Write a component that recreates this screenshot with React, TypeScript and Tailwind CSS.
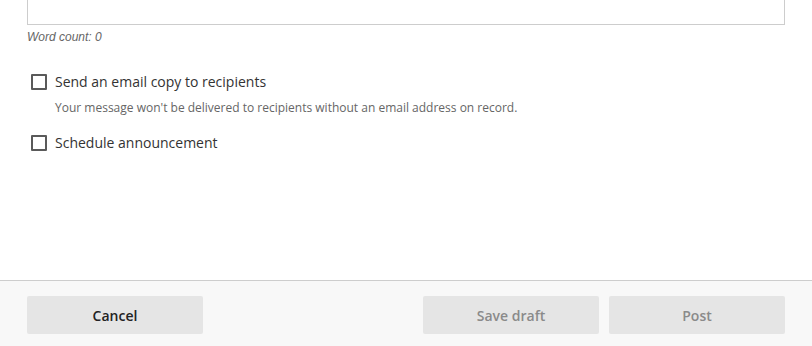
export default function App() {
  return (
    <div
      className="flex h-[346px] w-[812px] flex-col bg-white text-[#333]"
      style={{ fontFamily: '"Open Sans", sans-serif' }}
    >
      <div className="flex-1 px-[27px]">
        <div className="h-[25px] border border-t-0 border-[#cdcdcd] bg-white" />
        <p
          className="mt-[5px] text-[12px] italic leading-[14px] text-[#666]"
          style={{ fontFamily: '"Liberation Sans", Arial, sans-serif' }}
        >
          Word count: 0
        </p>

        <div className="mt-[28px] flex flex-col">
          <label className="flex items-center gap-[8px] pl-[4px]">
            <span className="h-[16px] w-[16px] rounded-[1px] border-2 border-[#5a5a5a]" />
            <span className="text-[14px] leading-[20px] text-[#333]">Send an email copy to recipients</span>
          </label>
          <p className="mt-[8px] pl-[28px] text-[12px] leading-[16px] text-[#666]">
            Your message won't be delivered to recipients without an email address on record.
          </p>
          <label className="mt-[17px] flex items-center gap-[8px] pl-[4px]">
            <span className="h-[16px] w-[16px] rounded-[1px] border-2 border-[#5a5a5a]" />
            <span className="text-[14px] leading-[20px] text-[#333]">Schedule announcement</span>
          </label>
        </div>
      </div>

      <div className="flex h-[66px] items-start justify-between border-t border-[#cdcdcd] bg-[#f8f8f8] px-[27px] pt-[15px]">
        <button className="h-[38px] w-[176px] rounded-[2px] bg-[#e5e5e5] text-[14px] font-semibold text-[#222]">
          Cancel
        </button>
        <div className="flex gap-[10px]">
          <button className="h-[38px] w-[176px] rounded-[2px] bg-[#e5e5e5] text-[14px] font-semibold text-[#8a8a8a]">
            Save draft
          </button>
          <button className="h-[38px] w-[176px] rounded-[2px] bg-[#e5e5e5] text-[14px] font-semibold text-[#8a8a8a]">
            Post
          </button>
        </div>
      </div>
    </div>
  );
}
